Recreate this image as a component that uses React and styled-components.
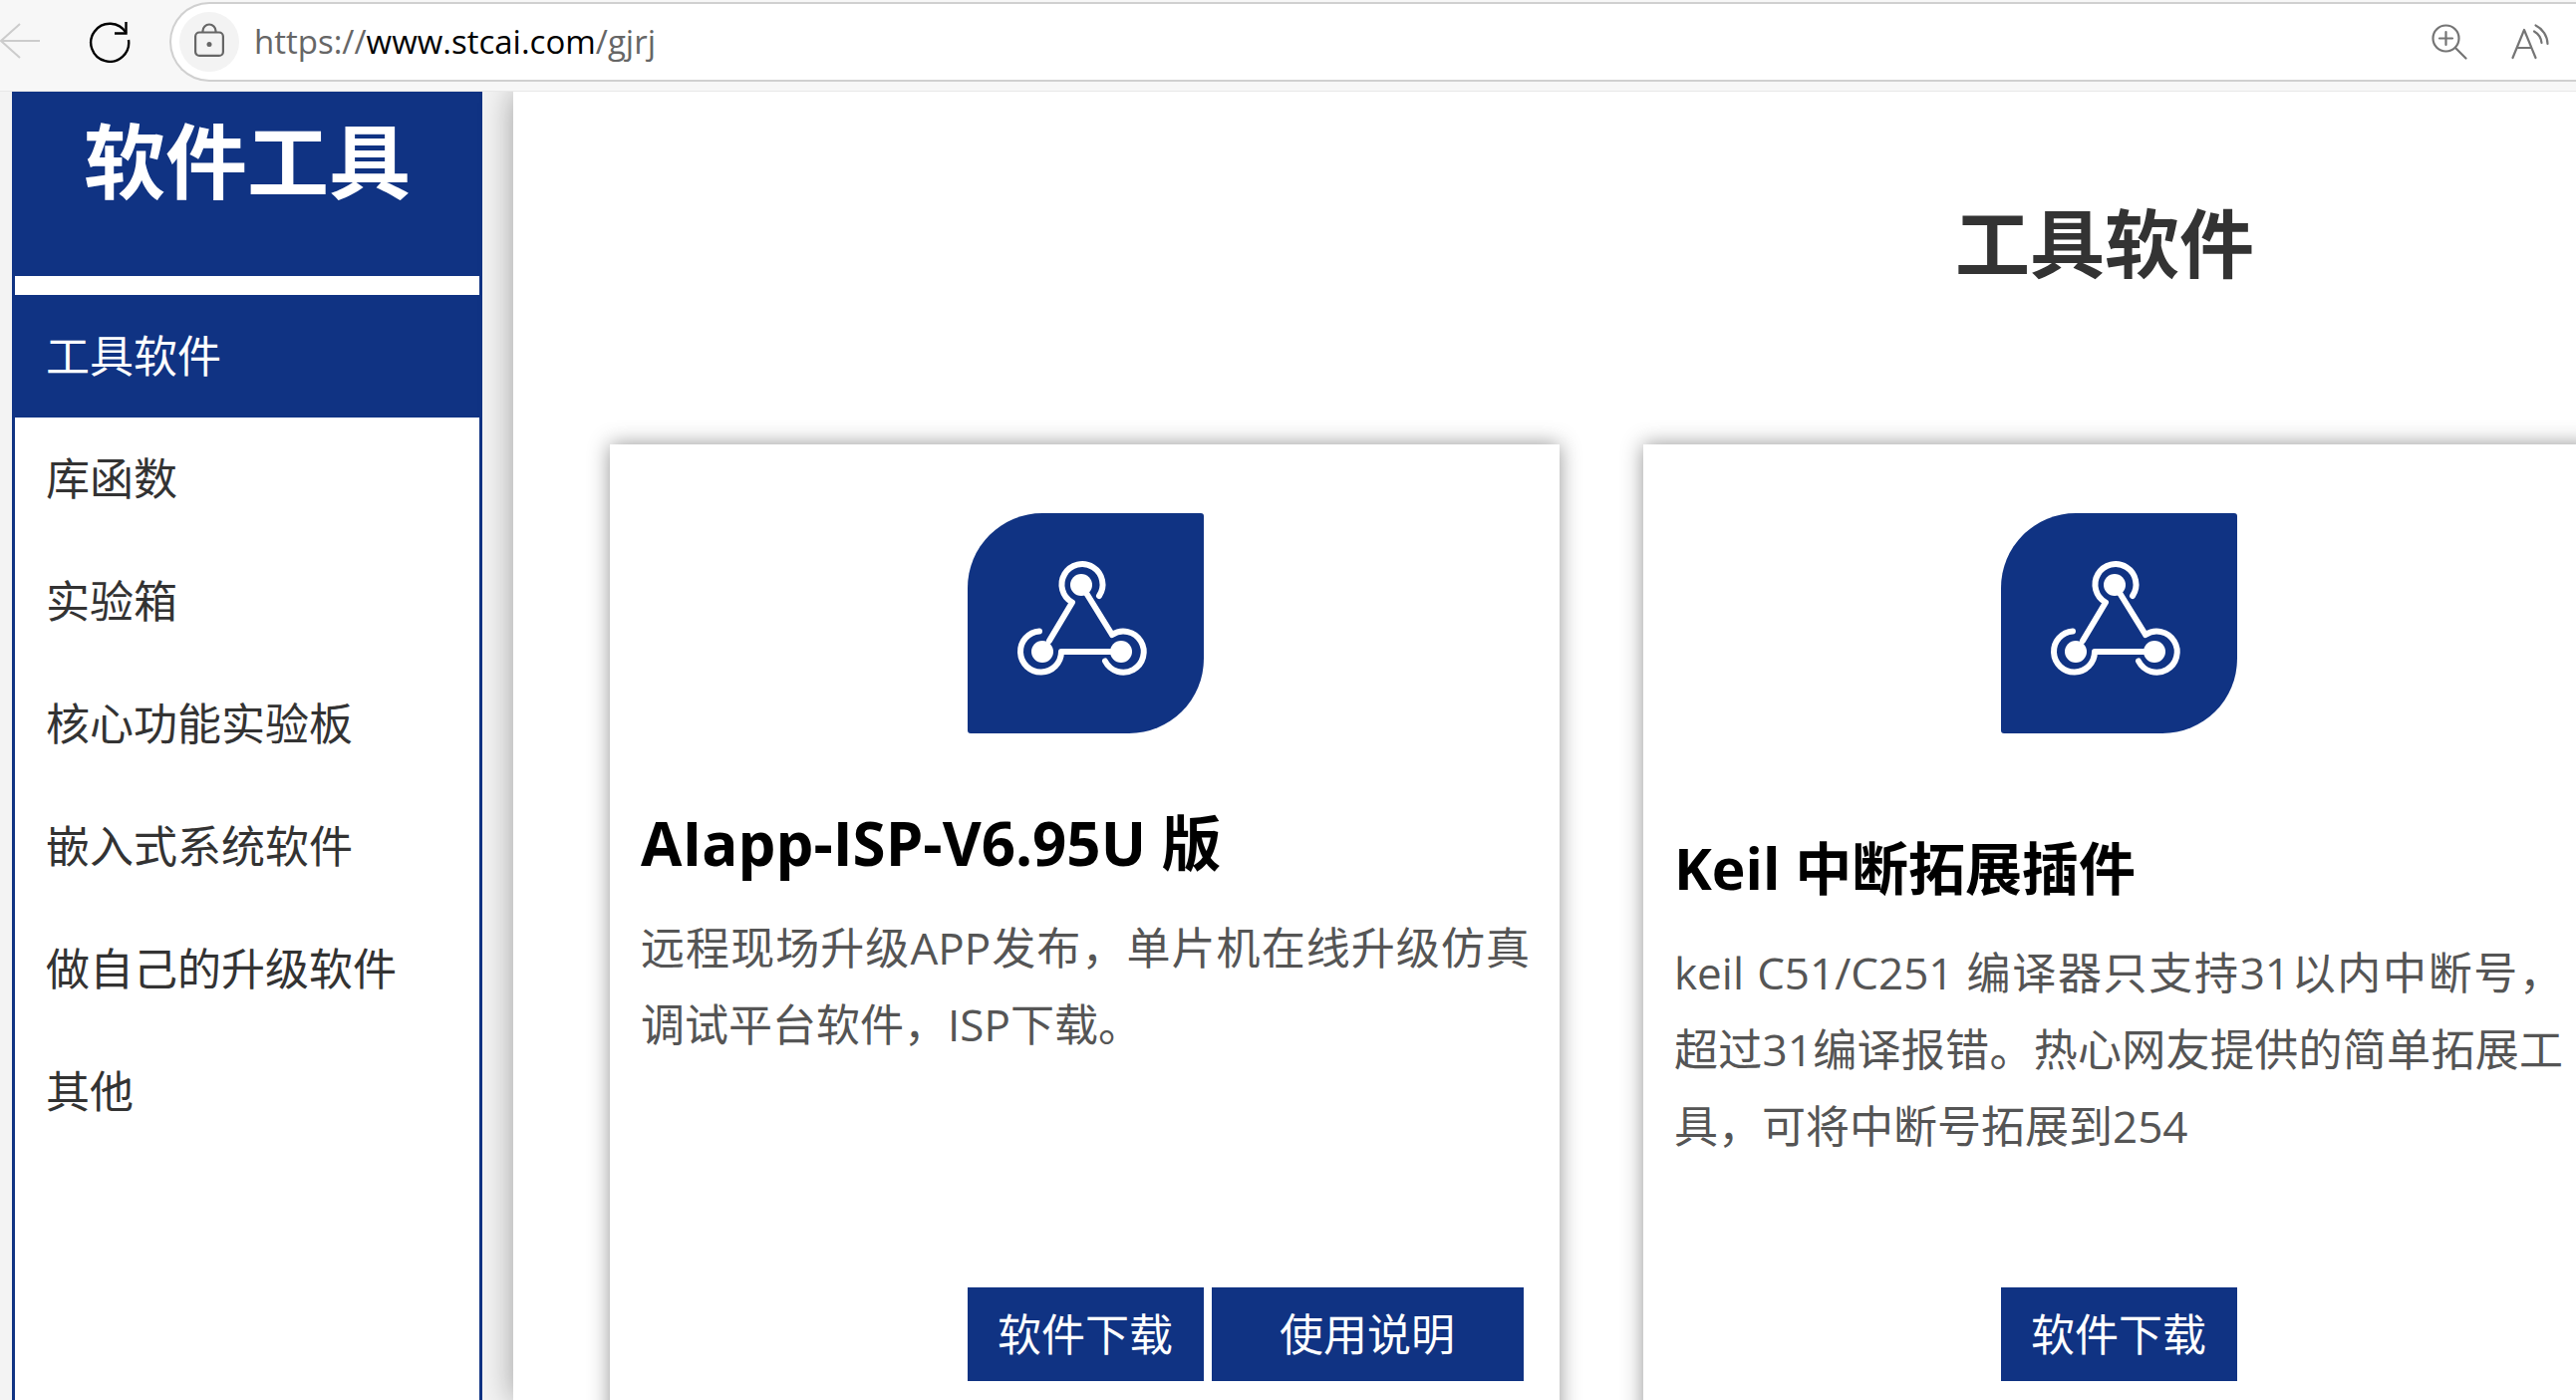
import React from 'react';
import styled, { createGlobalStyle } from 'styled-components';

const GlobalStyle = createGlobalStyle`
    * {
        box-sizing: border-box;
    }

    body {
        margin: 0;
        overflow: hidden;
        background: #f3f3f3;
        font-family: "Open Sans", "Noto Sans CJK SC", sans-serif;
    }

    h1, h2, h3, p, ul {
        margin: 0;
        padding: 0;
        font-weight: inherit;
    }
`;

const menu = [
    '工具软件',
    '库函数',
    '实验箱',
    '核心功能实验板',
    '嵌入式系统软件',
    '做自己的升级软件',
    '其他',
];

const tools = [
    {
        id: 1,
        name: 'AIapp-ISP-V6.95U 版',
        info: '远程现场升级APP发布，单片机在线升级仿真调试平台软件，ISP下载。',
        manual: true,
        large: true,
    },
    {
        id: 2,
        name: 'Keil 中断拓展插件',
        info: 'keil C51/C251 编译器只支持31以内中断号，超过31编译报错。热心网友提供的简单拓展工具，可将中断号拓展到254',
    },
];

const BackIcon = () => (
    <svg width="42" height="42" viewBox="0 0 42 42" fill="none" stroke="#cccccc" strokeWidth="2">
        <path d="M40 20H1M20 3L1 20L20 37" />
    </svg>
);

const ReloadIcon = () => (
    <svg width="42" height="42" viewBox="0 0 42 42" fill="none" stroke="#000" strokeWidth="2.4">
        <path d="M37.500 12A19 19 0 1 0 40 19" />
        <path d="M37.500 1V12.500H26" />
    </svg>
);

const LockIcon = () => (
    <svg width="30" height="34" viewBox="0 0 30 34" fill="none" stroke="#666666" strokeWidth="2.2">
        <rect x="1.100" y="9.500" width="27.800" height="23.400" rx="4" />
        <path d="M8.500 9.500V8a6.500 6.500 0 0 1 13 0V9.500" />
        <circle cx="15" cy="21.500" r="2.500" fill="#666666" stroke="none" />
    </svg>
);

const ZoomIcon = () => (
    <svg width="36" height="36" viewBox="0 0 36 36" fill="none" stroke="#757575" strokeWidth="2.2" strokeLinecap="round">
        <circle cx="14.500" cy="14.500" r="13" />
        <path d="M14.500 8V21M8 14.500H21M24 24L34.500 34.500" />
    </svg>
);

const ReadAloudIcon = () => (
    <svg width="38" height="36" viewBox="0 0 38 36" fill="none" stroke="#757575" strokeWidth="2.2" strokeLinecap="round" strokeLinejoin="round">
        <path d="M1.500 34L13 6L24.500 34M6 24H20" />
        <path d="M23 7.500A15 15 0 0 1 30.500 19" />
        <path d="M24.500 1.500A21 21 0 0 1 36.500 20" />
    </svg>
);

const NodesIcon = () => (
    <svg width="237" height="221" viewBox="0 0 237 221" fill="none" stroke="#fff" strokeWidth="6" strokeLinecap="round" strokeLinejoin="round">
        <path d="M132 83A20.500 20.500 0 1 0 105 89.500L82 128" />
        <path d="M72 118.500A20.500 20.500 0 1 0 94 139H146" />
        <path d="M138 148.500A20.500 20.500 0 1 0 145 122L119 80" />
        <g fill="#fff" stroke="none">
            <circle cx="114" cy="72" r="11" />
            <circle cx="75" cy="139" r="11" />
            <circle cx="154" cy="139" r="11" />
        </g>
    </svg>
);

const App = () => (
    <Page>
        <GlobalStyle />
        <Toolbar>
            <IconButton aria-label="Back"><BackIcon /></IconButton>
            <IconButton aria-label="Refresh"><ReloadIcon /></IconButton>
            <AddressBar>
                <SiteInfo aria-label="Site information"><LockIcon /></SiteInfo>
                <Url>https://<b>www.stcai.com</b>/gjrj</Url>
                <BarActions>
                    <IconButton aria-label="Zoom"><ZoomIcon /></IconButton>
                    <IconButton aria-label="Read aloud"><ReadAloudIcon /></IconButton>
                </BarActions>
            </AddressBar>
        </Toolbar>
        <Body>
            <Sidebar>
                <SidebarTitle>软件工具</SidebarTitle>
                <Menu>
                    {menu.map((item, i) => (
                        <li key={item}>
                            <MenuLink href="#" $active={i === 0}>{item}</MenuLink>
                        </li>
                    ))}
                </Menu>
            </Sidebar>
            <Main>
                <Content>
                    <Title>工具软件</Title>
                    <Cards>
                        {tools.map((tool) => (
                            <Card key={tool.id}>
                                <Badge><NodesIcon /></Badge>
                                <CardText $large={tool.large}>
                                    <CardTitle $large={tool.large}>{tool.name}</CardTitle>
                                    <CardInfo>{tool.info}</CardInfo>
                                </CardText>
                                <CardButtons>
                                    <CardButton>软件下载</CardButton>
                                    {tool.manual && <CardButton $wide>使用说明</CardButton>}
                                </CardButtons>
                            </Card>
                        ))}
                    </Cards>
                </Content>
            </Main>
        </Body>
    </Page>
);

export default App;

const Page = styled.div`
    display: flex;
    flex-direction: column;
    height: 100vh;
    overflow: hidden;
`;

const Toolbar = styled.header`
    display: flex;
    align-items: flex-start;
    flex: none;
    height: 92px;
    padding-top: 2px;
    background: #f7f7f7;
    border-bottom: 1px solid #e8e8e8;
`;

const IconButton = styled.button`
    display: flex;
    padding: 0;
    border: 0;
    background: none;

    ${Toolbar} > & {
        margin: 19px 47px 0 0;
    }

    ${Toolbar} > & + & {
        margin-right: 39px;
    }
`;

const AddressBar = styled.div`
    display: flex;
    align-items: center;
    flex: 1;
    height: 80px;
    padding: 0 0 0 8px;
    border: 2px solid #d0d0d0;
    border-right: 0;
    border-radius: 40px 0 0 40px;
    background: #fff;
`;

const SiteInfo = styled.button`
    display: flex;
    align-items: center;
    justify-content: center;
    width: 60px;
    height: 60px;
    padding: 0 0 4px;
    border: 0;
    border-radius: 50%;
    background: #f3f3f3;
`;

const Url = styled.span`
    margin-left: 15px;
    color: #666;
    font-size: 33px;
    line-height: 48px;

    b {
        color: #000;
        font-weight: 400;
    }
`;

const BarActions = styled.div`
    display: flex;
    gap: 44px;
    margin-left: auto;
    padding-right: 27px;
`;

const Body = styled.div`
    display: flex;
    flex: 1;
    min-height: 0;
    overflow: hidden;
`;

const Sidebar = styled.nav`
    flex: none;
    width: 472px;
    margin: 0 31px 0 12px;
    border: 3px solid #103383;
    border-width: 0 3px;
    background: #fff;
`;

const SidebarTitle = styled.h2`
    height: 185px;
    background: #103383;
    color: #fff;
    font-size: 82px;
    font-weight: 700;
    line-height: 138px;
    text-align: center;
`;

const Menu = styled.ul`
    padding-top: 19px;
    list-style: none;
`;

const MenuLink = styled.a`
    display: block;
    padding-left: 31px;
    background: ${(props) => (props.$active ? '#103383' : '#fff')};
    color: ${(props) => (props.$active ? '#fff' : '#333')};
    font-size: 44px;
    line-height: 123px;
    text-decoration: none;
`;

const Main = styled.main`
    flex: 1;
    min-width: 0;
    background: #fff;
    box-shadow: 0 0 30px rgba(0, 0, 0, 0.35);
`;

/* wider than the window, the third column runs off to the right */
const Content = styled.div`
    width: 154.3%;
`;

const Title = styled.h1`
    padding-top: 92px;
    height: 354px;
    color: #333;
    font-size: 75px;
    font-weight: 700;
    line-height: 120px;
    text-align: center;
`;

const Cards = styled.div`
    display: grid;
    grid-template-columns: repeat(3, 1fr);
    gap: 84px;
    padding: 0 70px 0 97px;
`;

const Card = styled.section`
    height: 1100px;
    padding: 69px 30px 0 31px;
    background: #fff;
    box-shadow: 0 0 20px rgba(0, 0, 0, 0.42);
`;

const Badge = styled.div`
    width: 237px;
    height: 221px;
    margin: 0 auto;
    border-radius: 75px 3px 75px 3px;
    background: #103383;
`;

const CardText = styled.div`
    min-height: 556px;
    padding-top: ${(props) => (props.$large ? '68px' : '93px')};
`;

const CardTitle = styled.h3`
    color: #000;
    font-size: ${(props) => (props.$large ? '60px' : '57px')};
    font-weight: 700;
    line-height: 84px;
    white-space: nowrap;
`;

const CardInfo = styled.p`
    margin-top: 25px;
    color: #555;
    font-size: 44px;
    line-height: 77px;
    text-align: justify;
`;

const CardButtons = styled.div`
    display: grid;
    grid-template-columns: 1fr 237px 1fr;
    gap: 8px;
`;

const CardButton = styled.button`
    width: ${(props) => (props.$wide ? '313px' : '237px')};
    height: 94px;
    padding: 0;
    border: 0;
    background: #103383;
    color: #fff;
    font-family: inherit;
    font-size: 44px;
    line-height: 94px;

    &:first-child {
        grid-column: 2;
    }
`;
